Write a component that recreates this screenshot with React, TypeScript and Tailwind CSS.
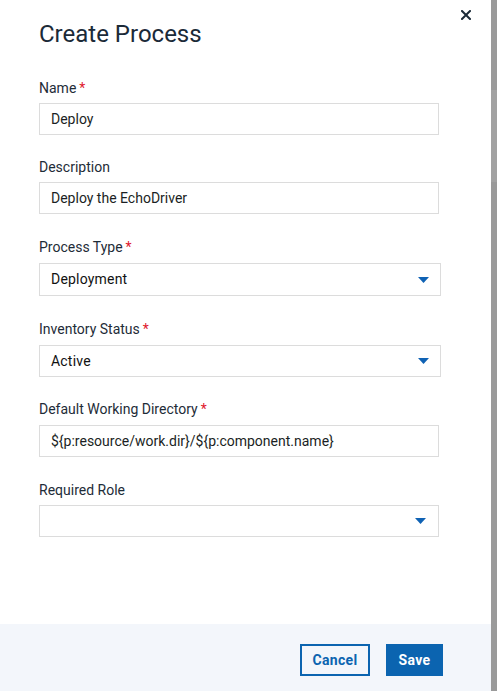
import React from "react";

const Req = () => <span className="ml-[3px] text-[#e0182d]">*</span>;

function Caret() {
  return (
    <svg width="11" height="6" viewBox="0 0 11 6" className="block">
      <path d="M0 0 H11 L5.5 6 Z" fill="#0f62b4" />
    </svg>
  );
}

export default function App() {
  return (
    <div
      className="flex h-[691px] w-[497px] overflow-hidden"
      style={{ fontFamily: "Roboto, 'Liberation Sans', sans-serif" }}
    >
      <div className="relative flex h-full w-[491px] flex-col bg-white">
        <button className="absolute left-[461px] top-[10px] h-[10px] w-[10px]">
          <svg width="10" height="10" viewBox="0 0 10 10" className="block">
            <path d="M1 1 L9 9 M9 1 L1 9" stroke="#1b2a38" strokeWidth="2" strokeLinecap="square" />
          </svg>
        </button>
        <div className="flex-1 pl-[39px]">
          <h1 className="mt-[18px] h-8 text-[24px] leading-8 font-normal text-[#1b2a38]">Create Process</h1>

          <div className="mt-[28px]">
            <div className="h-5 text-[14px] leading-5 text-[#1e2c38]">Name<Req /></div>
            <div className="mt-[5px] flex h-[32px] w-[400px] items-center border border-[#dcdcdc] px-[11px] text-[14px] text-[#1b1f24]">Deploy</div>
          </div>

          <div className="mt-[22px]">
            <div className="h-5 text-[14px] leading-5 text-[#1e2c38]">Description</div>
            <div className="mt-[5px] flex h-[32px] w-[400px] items-center border border-[#dcdcdc] px-[11px] text-[14px] text-[#1b1f24]">Deploy the EchoDriver</div>
          </div>

          <div className="mt-[23px]">
            <div className="h-5 text-[14px] leading-5 text-[#1e2c38]">Process Type<Req /></div>
            <div className="mt-[6px] flex h-[33px] w-[402px] items-center justify-between border border-[#dcdcdc] pl-[11px] pr-[11px] text-[14px] tracking-[0.2px] text-[#111]">
              <span>Deployment</span>
              <Caret />
            </div>
          </div>

          <div className="mt-[23px]">
            <div className="h-5 text-[14px] leading-5 text-[#1e2c38]">Inventory Status<Req /></div>
            <div className="mt-[6px] flex h-[32px] w-[402px] items-center justify-between border border-[#dcdcdc] pl-[11px] pr-[11px] text-[14px] tracking-[0.2px] text-[#111]">
              <span>Active</span>
              <Caret />
            </div>
          </div>

          <div className="mt-[22px]">
            <div className="h-5 text-[14px] leading-5 text-[#1e2c38]">Default Working Directory<Req /></div>
            <div className="mt-[6px] flex h-[32px] w-[400px] items-center border border-[#dcdcdc] px-[11px] text-[14px] text-[#1b1f24]">{"${p:resource/work.dir}/${p:component.name}"}</div>
          </div>

          <div className="mt-[23px]">
            <div className="h-5 text-[14px] leading-5 text-[#1e2c38]">Required Role</div>
            <div className="mt-[5px] flex h-[32px] w-[400px] items-center justify-end border border-[#dcdcdc] pr-[12px]">
              <Caret />
            </div>
          </div>
        </div>

        <div className="flex h-[67px] justify-end gap-4 bg-[#f3f6fb] pr-[48px] pt-[20px]">
          <button className="h-[32px] w-[70px] border-2 border-[#0b64b0] text-[14px] font-bold tracking-[0.3px] text-[#0b64b0]">Cancel</button>
          <button className="h-[32px] w-[57px] bg-[#0b64b0] text-[14px] font-bold tracking-[0.3px] text-white">Save</button>
        </div>
      </div>
      <div className="flex w-[6px] flex-col bg-[#9a9a9a]">
        <div className="h-[90px]" />
        <div className="h-[92px] bg-[#a2a2a2]" />
      </div>
    </div>
  );
}
